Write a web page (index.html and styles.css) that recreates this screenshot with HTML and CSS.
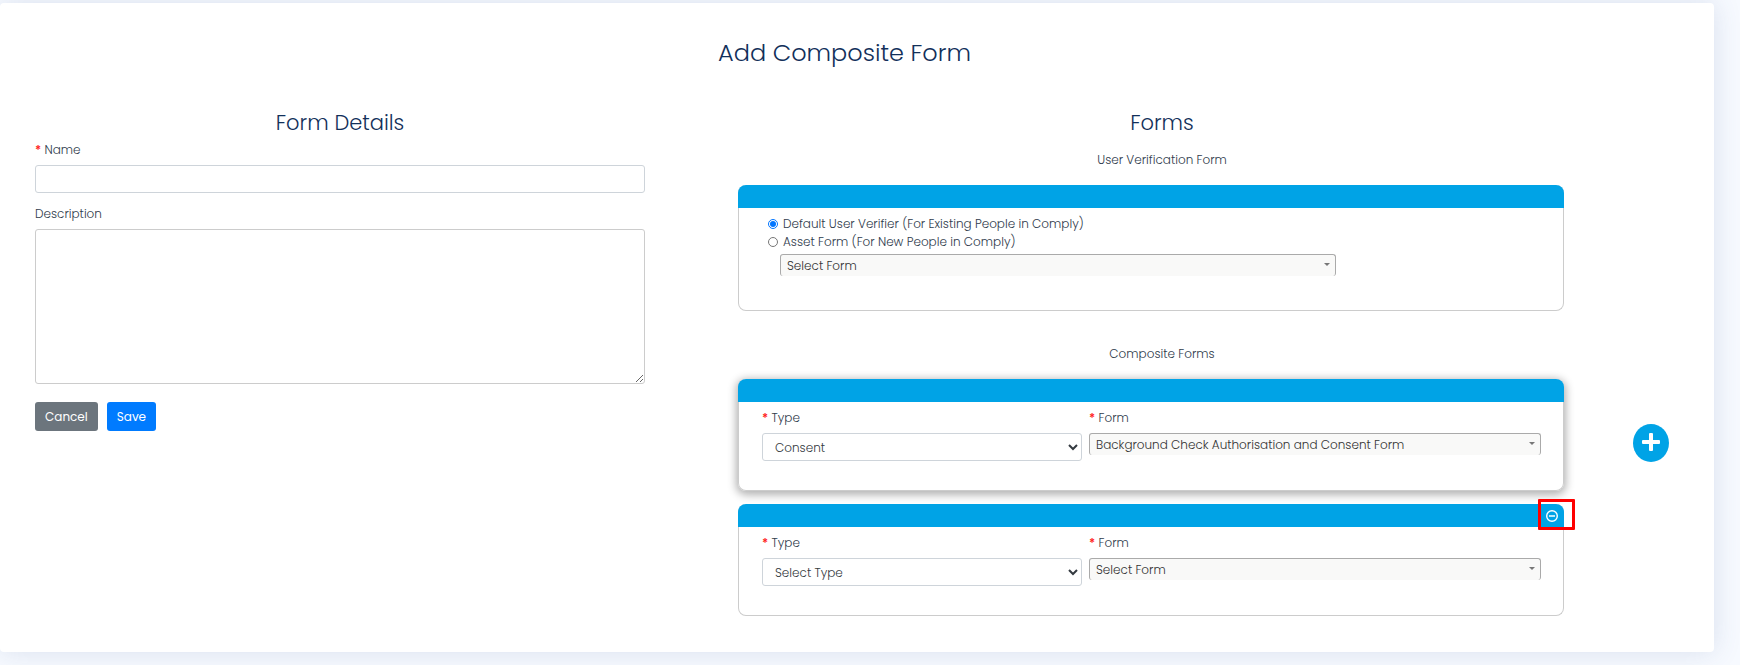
FILE: index.html
```
<!DOCTYPE html>
<html lang="en">
<head>
    <meta charset="UTF-8">
    <title>Add Composite Form</title>
    <meta name="viewport" content="width=device-width, initial-scale=1.0">
    <link rel="stylesheet" href="styles.css">
</head>
<body>
    <main class="panel">
        <h1>Add Composite Form</h1>

        <form class="columns">
            <!-- Form details -->
            <section class="details">
                <h2>Form Details</h2>
                <label for="name"><span class="required">*</span> Name</label>
                <input type="text" id="name" class="control">
                <label for="description">Description</label>
                <textarea id="description" class="control"></textarea>
                <div class="button-group">
                    <button type="button" class="btn btn-cancel">Cancel</button>
                    <button type="submit" class="btn btn-save">Save</button>
                </div>
            </section>

            <!-- Forms -->
            <section class="forms">
                <h2>Forms</h2>
                <h3>User Verification Form</h3>
                <div class="card verification">
                    <div class="card-header"></div>
                    <div class="card-body">
                        <div class="radio-row">
                            <input type="radio" name="verifier" id="default-verifier" checked>
                            <label for="default-verifier">Default User Verifier (For Existing People in Comply)</label>
                        </div>
                        <div class="radio-row">
                            <input type="radio" name="verifier" id="asset-form">
                            <label for="asset-form">Asset Form (For New People in Comply)</label>
                        </div>
                        <select class="form-picker" aria-label="Asset form">
                            <option>Select Form</option>
                        </select>
                    </div>
                </div>

                <h3>Composite Forms</h3>
                <div class="card composite active">
                    <div class="card-header"></div>
                    <div class="card-body">
                        <div class="field">
                            <label for="type-1"><span class="required">*</span> Type</label>
                            <select id="type-1" class="control">
                                <option>Consent</option>
                            </select>
                        </div>
                        <div class="field">
                            <label for="form-1"><span class="required">*</span> Form</label>
                            <select id="form-1" class="form-picker">
                                <option>Background Check Authorisation and Consent Form</option>
                            </select>
                        </div>
                    </div>
                </div>
                <div class="card composite">
                    <div class="card-header">
                        <button type="button" class="remove-button" aria-label="Remove form">
                            <svg width="12" height="12" viewBox="0 0 12 12" fill="none" stroke="#fff">
                                <circle cx="6" cy="6" r="5.3" stroke-width="1.4"/>
                                <path d="M3 6h6" stroke-width="1.5"/>
                            </svg>
                        </button>
                        <span class="highlight"></span>
                    </div>
                    <div class="card-body">
                        <div class="field">
                            <label for="type-2"><span class="required">*</span> Type</label>
                            <select id="type-2" class="control">
                                <option>Select Type</option>
                            </select>
                        </div>
                        <div class="field">
                            <label for="form-2"><span class="required">*</span> Form</label>
                            <select id="form-2" class="form-picker">
                                <option>Select Form</option>
                            </select>
                        </div>
                    </div>
                </div>
            </section>

            <button type="button" class="add-button" aria-label="Add form">
                <svg width="18" height="18" viewBox="0 0 18 18" fill="#fff">
                    <rect x="7" y="0" width="4" height="18" rx="1"/>
                    <rect x="0" y="7" width="18" height="4" rx="1"/>
                </svg>
            </button>
        </form>
    </main>
</body>
</html>
```
FILE: styles.css
```
* {
    box-sizing: border-box;
}
body {
    margin: 0;
    padding: 3px 26px 13px 0;
    background-color: #f7faff;
    color: #2f3b4c;
    font-family: Poppins, Inter, sans-serif;
    font-size: 12px;
    font-weight: 300;
    line-height: 18px;
}
h1, h2, h3 {
    margin: 0;
    font-weight: 300;
    text-align: center;
}
h1 {
    color: #12305a;
    font-size: 24px;
    line-height: 30px;
    margin-bottom: 42px;
}
h2 {
    color: #12305a;
    font-size: 21px;
    line-height: 26px;
}
h3 {
    font-size: 12px;
    line-height: 18px;
}
.panel {
    background-color: #fff;
    border-radius: 4px;
    box-shadow: 0 0 28px rgba(60, 90, 140, 0.16);
    padding: 35px 45px 36px 20px;
}
.columns {
    display: flex;
}
.details {
    flex: 610;
    margin: 0 93px 0 15px;
}
.details label {
    display: block;
    margin: 5px 0 6px;
}
.details input + label {
    margin-top: 12px;
}
.required {
    color: #f22;
    font-weight: 600;
}
.control {
    display: block;
    width: 100%;
    height: 28px;
    border: 1px solid #ced4da;
    border-radius: 3px;
    background-color: #fff;
    color: #343a40;
    font: inherit;
    padding: 0 8px;
}
textarea.control {
    height: 155px;
    border-color: #ccc;
}
.button-group {
    display: flex;
    gap: 9px;
    margin-top: 18px;
}
.btn {
    height: 29px;
    padding: 0 10px;
    border: none;
    border-radius: 3px;
    color: #fff;
    font: inherit;
    font-weight: 400;
    cursor: pointer;
}
.btn-cancel {
    background-color: #6c757d;
}
.btn-save {
    background-color: #007bff;
}

/* Form cards */
.forms {
    flex: 848;
}
.forms h3 {
    margin: 15px 0 16px;
}
.card {
    position: relative;
    margin-right: 22px;
    border: 1px solid #ccc;
    border-top: none;
    border-radius: 8px;
}
.card-header {
    display: flex;
    align-items: center;
    justify-content: flex-end;
    height: 23px;
    margin: 0 -1px;
    padding-right: 6px;
    background-color: #00a3e6;
    border-radius: 8px 8px 0 0;
}
.verification .card-body {
    padding: 7px 33px 34px 29px;
}
.forms .verification + h3 {
    margin-top: 34px;
}
.radio-row {
    display: flex;
    align-items: center;
}
.radio-row input {
    width: 10px;
    height: 10px;
    margin: 0 5px 0 0;
}
.form-picker {
    appearance: none;
    display: block;
    width: 100%;
    height: 22px;
    border: 1px solid #aaa;
    border-bottom: none;
    border-radius: 3px;
    background: #f9f9f8 url("data:image/svg+xml,%3Csvg xmlns='http://www.w3.org/2000/svg' width='6' height='3'%3E%3Cpath d='M0 0h6L3 3z' fill='%23777'/%3E%3C/svg%3E") no-repeat right 5px top 8px;
    color: #333;
    font: inherit;
    padding: 0 18px 0 6px;
}
.verification .form-picker {
    width: 73%;
    margin: 3px 0 0 12px;
}
.composite {
    margin-bottom: 13px;
}
.composite:last-child {
    margin-bottom: 0;
}
.composite .card-body {
    display: flex;
    gap: 7px;
    padding: 7px 22px 29px 23px;
}
.field:first-child {
    flex: 320;
}
.field:last-child {
    flex: 452;
}
.field label {
    display: block;
    margin-bottom: 6px;
}
.active {
    box-shadow: 0 2px 8px 2px rgba(0, 0, 0, 0.3);
}
.remove-button {
    display: flex;
    padding: 0;
    border: none;
    background: none;
    cursor: pointer;
}
/* Callout over the remove button */
.highlight {
    position: absolute;
    top: -5px;
    right: -12px;
    width: 37px;
    height: 31px;
    border: 3px solid #f00;
    border-radius: 1px;
    pointer-events: none;
}
.add-button {
    display: flex;
    justify-content: center;
    width: 36px;
    height: 38px;
    margin: 314px 0 0 47px;
    padding: 9px 0;
    border: none;
    border-radius: 50%;
    background-color: #00a3e6;
    cursor: pointer;
}
```
